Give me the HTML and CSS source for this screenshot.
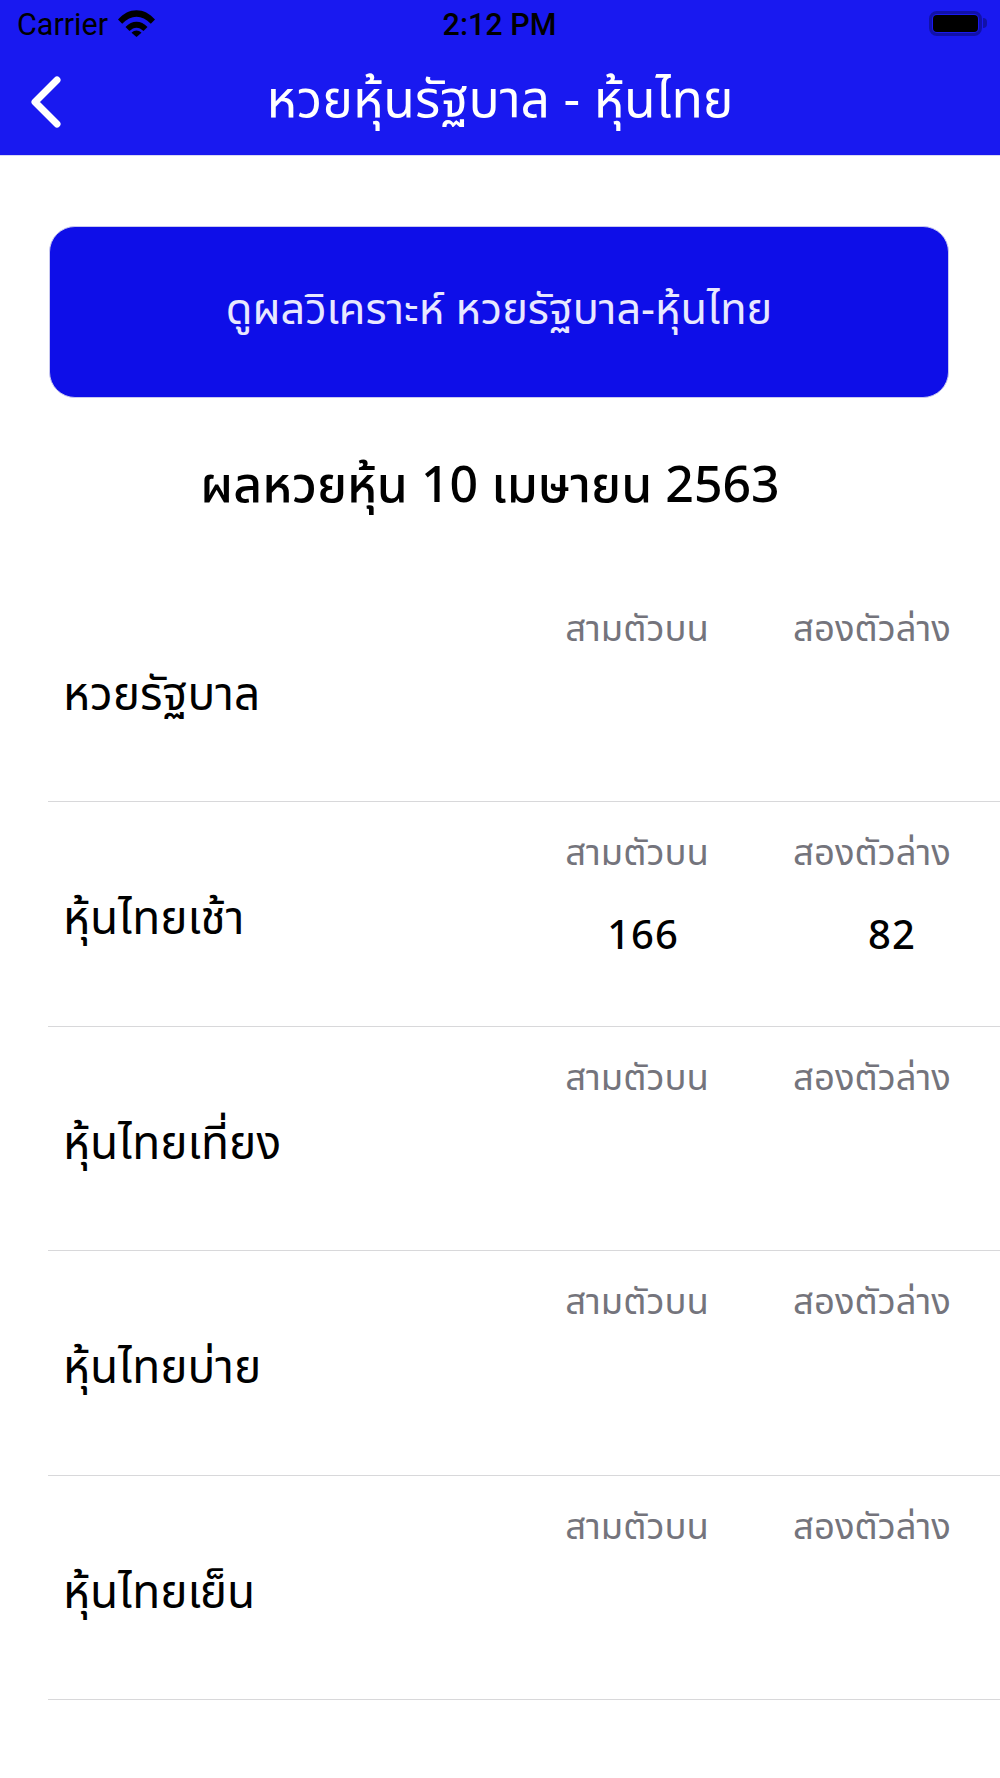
FILE: index.html
```html
<!DOCTYPE html>
<html lang="th">
<head>
<meta charset="utf-8">
<title>หวยหุ้นรัฐบาล - หุ้นไทย</title>
<link rel="stylesheet" href="styles.css">
</head>
<body>
<header class="top">
  <div class="status">
    <div class="status-left">
      <span>Carrier</span>
      <svg class="wifi" width="37" height="27" viewBox="0 0 37 27"><path d="M0 9.500C10.500 -3 26.500 -3 37 9.500L32.800 13.800C24 4.500 13 4.500 4.200 13.800Z"/><path d="M7.500 17C14 10 23 10 29.500 17L25.500 21C21 16.500 16 16.500 11.500 21Z"/><path d="M13.500 22.800C16.800 19.800 20.200 19.800 23.500 22.800L18.500 27Z"/></svg>
    </div>
    <span class="clock">2:12 PM</span>
    <div class="battery"><span class="battery-fill"></span></div>
  </div>
  <div class="nav">
    <svg class="back" width="36" height="58" viewBox="0 0 36 58"><path d="M30 7L8 29L30 51"/></svg>
    <h1 class="nav-title">หวยหุ้นรัฐบาล - หุ้นไทย</h1>
  </div>
</header>
<main class="content">
  <button class="cta">ดูผลวิเคราะห์ หวยรัฐบาล-หุ้นไทย</button>
  <h2 class="date">ผลหวยหุ้น 10 เมษายน 2563</h2>
  <section class="list">
    <article class="row">
      <div class="name">หวยรัฐบาล</div>
      <div class="col col-a"><div class="label">สามตัวบน</div><div class="val"></div></div>
      <div class="col col-b"><div class="label">สองตัวล่าง</div><div class="val"></div></div>
    </article>
    <article class="row">
      <div class="name">หุ้นไทยเช้า</div>
      <div class="col col-a"><div class="label">สามตัวบน</div><div class="val">166</div></div>
      <div class="col col-b"><div class="label">สองตัวล่าง</div><div class="val">82</div></div>
    </article>
    <article class="row">
      <div class="name">หุ้นไทยเที่ยง</div>
      <div class="col col-a"><div class="label">สามตัวบน</div><div class="val"></div></div>
      <div class="col col-b"><div class="label">สองตัวล่าง</div><div class="val"></div></div>
    </article>
    <article class="row">
      <div class="name">หุ้นไทยบ่าย</div>
      <div class="col col-a"><div class="label">สามตัวบน</div><div class="val"></div></div>
      <div class="col col-b"><div class="label">สองตัวล่าง</div><div class="val"></div></div>
    </article>
    <article class="row">
      <div class="name">หุ้นไทยเย็น</div>
      <div class="col col-a"><div class="label">สามตัวบน</div><div class="val"></div></div>
      <div class="col col-b"><div class="label">สองตัวล่าง</div><div class="val"></div></div>
    </article>
  </section>
</main>
</body>
</html>
```

FILE: styles.css
```css
* { box-sizing: border-box; }
html, body { margin: 0; padding: 0; }
body {
  width: 1000px;
  height: 1778px;
  overflow: hidden;
  background: #fff;
  font-family: "Noto Sans Thai", "Noto Sans", "Liberation Sans", sans-serif;
  color: #000;
}
.top { height: 156px; background: #1919f0; border-bottom: 1px solid #d8d8f4; }
.status {
  height: 49px;
  padding: 0 18px 0 17px;
  display: grid;
  grid-template-columns: 1fr auto 1fr;
  align-items: center;
  font-family: Roboto, "Liberation Sans", sans-serif;
  font-size: 30.500px;
  color: #000;
}
.status-left { display: flex; align-items: center; gap: 10px; }
.wifi { fill: #000; margin-top: -2px; }
.clock { font-weight: 500; }
.battery {
  position: relative;
  justify-self: end;
  width: 53px;
  height: 25px;
  margin-bottom: 2px;
  border: 3px solid #1111a8;
  border-radius: 8px;
  padding: 1px;
}
.battery::after {
  content: "";
  position: absolute;
  left: 51px;
  top: 4px;
  width: 4px;
  height: 10px;
  background: #1111a8;
  border-radius: 0 5px 5px 0;
}
.battery-fill { display: block; width: 100%; height: 100%; background: #000; border-radius: 4px; }
.nav { position: relative; height: 106px; padding-bottom: 2px; display: flex; align-items: center; justify-content: center; }
.back { position: absolute; left: 27px; top: 24px; fill: none; stroke: #fff; stroke-width: 7; stroke-linecap: round; stroke-linejoin: round; }
.nav-title { margin: 0; font-size: 51.700px; font-weight: 400; color: #fff; line-height: 60px; }
.content { padding: 70px 0 0 48px; }
.cta {
  display: block;
  width: 900px;
  height: 172px;
  margin-left: 1px;
  background: #0e0ee8;
  border: 1px solid #c8c8f0;
  border-radius: 26px;
  color: #e8e8ff;
  font-family: inherit;
  font-size: 43.300px;
  font-weight: 400;
  padding: 0 0 4px;
}
.date { margin: 54px 0 0; padding-right: 68px; font-size: 50px; font-weight: 500; line-height: 70px; text-align: center; }
.list { margin-top: 56px; }
.row { position: relative; height: 224.400px; border-bottom: 1px solid #d8d8da; display: flex; }
.name { position: absolute; left: 15px; top: 86px; font-size: 46px; line-height: 64px; }
.col { position: absolute; top: 27px; text-align: center; }
.col-a { left: 516px; width: 146px; }
.col-b { left: 744px; width: 160px; }
.label { font-size: 36.500px; line-height: 50px; color: #74747c; }
.val { font-size: 40px; font-weight: 500; line-height: 60px; margin-top: 28px; letter-spacing: 1px; }
.col-a .val { padding-left: 12px; }
.col-b .val { padding-left: 40px; }
```
